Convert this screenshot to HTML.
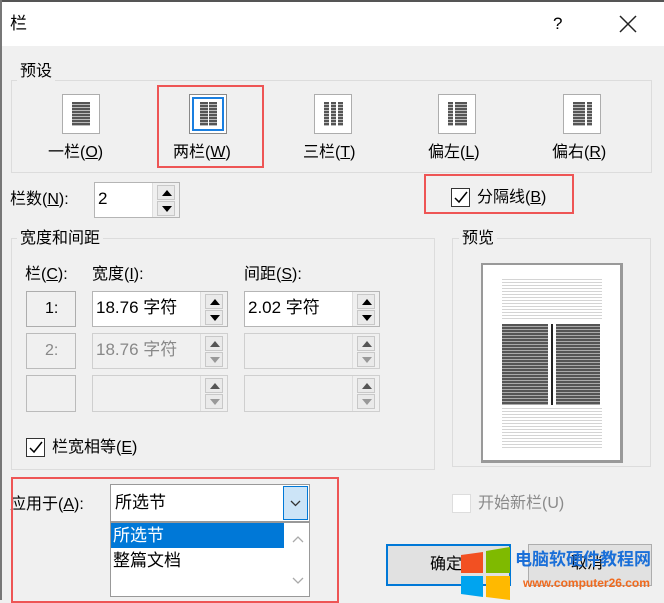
<!DOCTYPE html>
<html><head><meta charset="utf-8"><style>
*{box-sizing:border-box;margin:0;padding:0}
body{width:664px;height:600px;background:#f0f0f0;font-family:"Liberation Sans","Noto Sans CJK SC",sans-serif;font-size:16px;color:#000;position:relative;overflow:hidden}
.a{position:absolute}
.t{position:absolute;white-space:nowrap;line-height:20px}
.grp{position:absolute;border:1px solid #dcdcdc}
.ico{position:absolute;width:38px;height:40px;background:#fff;border:1px solid #adadad}
.red{position:absolute;border:2px solid #ee5555;z-index:5}
.inp{position:absolute;background:#fff;border:1px solid #b5b5b5}
.dis{background:#f0f0f0;border-color:#cfcfcf}
.sp{position:absolute;right:0;top:0;bottom:0;width:27px;border-left:1px solid #ddd;background:#f0f0f0}
.sp i{position:absolute;left:4px;width:18px;height:15px;border:1px solid #c8c8c8;background:#eaeaea}
.up:after{content:"";position:absolute;left:4px;top:4px;border-left:5px solid transparent;border-right:5px solid transparent;border-bottom:6px solid #000}
.dn:after{content:"";position:absolute;left:4px;top:4px;border-left:5px solid transparent;border-right:5px solid transparent;border-top:6px solid #000}
.g.up:after{border-bottom-color:#555}.g.dn:after{border-top-color:#999}
.btn{position:absolute;background:#f0f0f0;border:1px solid #adadad}
.cb{position:absolute;width:19px;height:19px;border:1px solid #333;background:#fff}
u{text-decoration:underline}
</style></head><body>
<div class="a" style="left:0;top:0;width:664px;height:46px;background:#fff;border-top:2px solid #555"></div>
<div class="a" style="left:0;top:0;width:2px;height:600px;background:#777"></div>
<div class="t" style="left:10px;top:14px;font-size:17px">栏</div>
<div class="t" style="left:553px;top:14px;font-size:17px">?</div>
<svg class="a" style="left:618px;top:14px" width="20" height="20"><path d="M2 2L18 18M18 2L2 18" stroke="#222" stroke-width="1.5"/></svg>

<div class="grp" style="left:11px;top:80px;width:641px;height:93px"></div>
<div class="t" style="left:17px;top:62px;background:#f0f0f0;padding:0 3px">预设</div>
<div class="ico" style="left:62px;top:94px"><div class="a" style="left:9px;top:7px;width:18px;height:24px;background:repeating-linear-gradient(#555 0 2px,#bbb 2px 3px)"></div></div>
<div class="ico" style="left:189px;top:94px;border:1px solid #888"><div class="a" style="left:2px;top:2px;width:32px;height:34px;border:2px solid #1a7fe0"></div><div class="a" style="left:10px;top:7px;width:8px;height:24px;background:repeating-linear-gradient(#555 0 2px,#bbb 2px 3px)"></div><div class="a" style="left:19px;top:7px;width:8px;height:24px;background:repeating-linear-gradient(#555 0 2px,#bbb 2px 3px)"></div></div>
<div class="ico" style="left:314px;top:94px"><div class="a" style="left:9px;top:7px;width:5px;height:24px;background:repeating-linear-gradient(#555 0 2px,#bbb 2px 3px)"></div><div class="a" style="left:16px;top:7px;width:5px;height:24px;background:repeating-linear-gradient(#555 0 2px,#bbb 2px 3px)"></div><div class="a" style="left:23px;top:7px;width:5px;height:24px;background:repeating-linear-gradient(#555 0 2px,#bbb 2px 3px)"></div></div>
<div class="ico" style="left:438px;top:94px"><div class="a" style="left:9px;top:7px;width:5px;height:24px;background:repeating-linear-gradient(#555 0 2px,#bbb 2px 3px)"></div><div class="a" style="left:16px;top:7px;width:12px;height:24px;background:repeating-linear-gradient(#555 0 2px,#bbb 2px 3px)"></div></div>
<div class="ico" style="left:563px;top:94px"><div class="a" style="left:9px;top:7px;width:12px;height:24px;background:repeating-linear-gradient(#555 0 2px,#bbb 2px 3px)"></div><div class="a" style="left:23px;top:7px;width:5px;height:24px;background:repeating-linear-gradient(#555 0 2px,#bbb 2px 3px)"></div></div>
<div class="t" style="left:48px;top:143px">一栏(<u>O</u>)</div>
<div class="t" style="left:173px;top:143px">两栏(<u>W</u>)</div>
<div class="t" style="left:303px;top:143px">三栏(<u>T</u>)</div>
<div class="t" style="left:428px;top:143px">偏左(<u>L</u>)</div>
<div class="t" style="left:552px;top:143px">偏右(<u>R</u>)</div>
<div class="red" style="left:157px;top:85px;width:107px;height:83px"></div>

<div class="t" style="left:10px;top:190px">栏数(<u>N</u>):</div>
<div class="inp" style="left:94px;top:182px;width:86px;height:36px"><div class="t" style="left:3px;top:6px;font-size:17px">2</div><div class="sp"><i class="up" style="top:2px"></i><i class="dn" style="top:18px"></i></div></div>
<div class="red" style="left:424px;top:174px;width:150px;height:40px"></div>
<div class="cb" style="left:451px;top:188px"><svg width="17" height="17" class="a"><path d="M3 9l4 4 8-10" stroke="#000" stroke-width="1.5" fill="none"/></svg></div>
<div class="t" style="left:477px;top:188px">分隔线(<u>B</u>)</div>

<div class="grp" style="left:11px;top:238px;width:424px;height:232px"></div>
<div class="t" style="left:17px;top:229px;background:#f0f0f0;padding:0 3px">宽度和间距</div>
<div class="grp" style="left:452px;top:238px;width:199px;height:229px"></div>
<div class="t" style="left:459px;top:229px;background:#f0f0f0;padding:0 3px">预览</div>
<div class="a" style="left:481px;top:263px;width:142px;height:200px;background:#fff;border:3px solid #999;border-top-width:2px;border-left-width:2px"></div>
<div class="a" style="left:502px;top:279px;width:100px;height:42px;background:repeating-linear-gradient(#d4d4d4 0 1px,#fff 1px 3px)"></div>
<div class="a" style="left:502px;top:324px;width:46px;height:81px;background:repeating-linear-gradient(#555 0 2px,#aaa 2px 3px)"></div>
<div class="a" style="left:551px;top:324px;width:2px;height:81px;background:#222"></div>
<div class="a" style="left:556px;top:324px;width:44px;height:81px;background:repeating-linear-gradient(#555 0 2px,#aaa 2px 3px)"></div>
<div class="a" style="left:502px;top:408px;width:100px;height:40px;background:repeating-linear-gradient(#d4d4d4 0 1px,#fff 1px 3px)"></div>

<div class="t" style="left:25px;top:265px">栏(<u>C</u>):</div>
<div class="t" style="left:92px;top:265px">宽度(<u>I</u>):</div>
<div class="t" style="left:244px;top:265px">间距(<u>S</u>):</div>
<div class="btn" style="left:26px;top:291px;width:50px;height:36px"><div class="t" style="left:18px;top:7px">1:</div></div>
<div class="btn" style="left:26px;top:333px;width:50px;height:36px;border-color:#bbb"><div class="t" style="left:18px;top:7px;color:#888">2:</div></div>
<div class="btn" style="left:26px;top:375px;width:50px;height:37px;border-color:#bbb"></div>
<div class="inp" style="left:92px;top:291px;width:136px;height:36px"><div class="t" style="left:3px;top:6px;font-size:17px">18.76 字符</div><div class="sp"><i class="up" style="top:2px"></i><i class="dn" style="top:18px"></i></div></div>
<div class="inp dis" style="left:92px;top:333px;width:136px;height:36px"><div class="t" style="left:3px;top:6px;font-size:17px;color:#888">18.76 字符</div><div class="sp"><i class="up g" style="top:2px"></i><i class="dn g" style="top:18px"></i></div></div>
<div class="inp dis" style="left:92px;top:375px;width:136px;height:37px"><div class="sp"><i class="up g" style="top:2px"></i><i class="dn g" style="top:18px"></i></div></div>
<div class="inp" style="left:244px;top:291px;width:136px;height:36px"><div class="t" style="left:3px;top:6px;font-size:17px">2.02 字符</div><div class="sp"><i class="up" style="top:2px"></i><i class="dn" style="top:18px"></i></div></div>
<div class="inp dis" style="left:244px;top:333px;width:136px;height:36px"><div class="sp"><i class="up g" style="top:2px"></i><i class="dn g" style="top:18px"></i></div></div>
<div class="inp dis" style="left:244px;top:375px;width:136px;height:37px"><div class="sp"><i class="up g" style="top:2px"></i><i class="dn g" style="top:18px"></i></div></div>
<div class="cb" style="left:26px;top:438px"><svg width="17" height="17" class="a"><path d="M3 9l4 4 8-10" stroke="#000" stroke-width="1.5" fill="none"/></svg></div>
<div class="t" style="left:52px;top:438px">栏宽相等(<u>E</u>)</div>

<div class="red" style="left:11px;top:477px;width:328px;height:126px"></div>
<div class="t" style="left:10px;top:495px">应用于(<u>A</u>):</div>
<div class="inp" style="left:110px;top:484px;width:200px;height:38px;border-color:#999"><div class="t" style="left:4px;top:8px;font-size:17px">所选节</div><div class="a" style="right:1px;top:1px;width:25px;height:34px;background:#cce4f7;border:1px solid #0078d7"><svg width="23" height="32" class="a"><path d="M7 14l4.5 4.5L16 14" stroke="#333" stroke-width="1.3" fill="none"/></svg></div></div>
<div class="a" style="left:110px;top:522px;width:200px;height:75px;background:#fff;border:1px solid #999"></div>
<div class="a" style="left:111px;top:523px;width:173px;height:25px;background:#0078d7"></div>
<div class="t" style="left:113px;top:526px;color:#fff;font-size:17px">所选节</div>
<div class="t" style="left:113px;top:551px;font-size:17px">整篇文档</div>
<svg class="a" style="left:290px;top:530px" width="16" height="60"><path d="M3 12l5-5 5 5M3 48l5 5 5-5" stroke="#aaa" stroke-width="1.3" fill="none"/></svg>

<div class="a" style="left:452px;top:494px;width:19px;height:19px;background:#fff;border:1px solid #ddd"></div>
<div class="t" style="left:478px;top:494px;color:#8a8a8a">开始新栏(U)</div>

<div class="btn" style="left:386px;top:544px;width:125px;height:42px;border:2px solid #0078d7;background:#e1e1e1"><div class="t" style="left:42px;top:9px">确定</div></div>
<div class="btn" style="left:528px;top:544px;width:124px;height:42px;background:#e1e1e1"><div class="t" style="left:42px;top:9px">取消</div></div>
<svg class="a" style="left:460px;top:545px" width="52" height="55"><path d="M1 10L23 7V28H1Z" fill="#f25022"/><path d="M26 6L50 2V28H26Z" fill="#7fba00"/><path d="M1 31H23V52L1 49Z" fill="#00a4ef"/><path d="M26 31H50V55L26 52Z" fill="#ffb900"/></svg>
<div class="t" style="left:515px;top:550px;color:#1a6fd8;font-size:17px;font-weight:bold">电脑软硬件教程网</div>
<div class="t" style="left:523px;top:573px;color:#f06a1e;font-size:12px;font-weight:bold">www.computer26.com</div>
</body></html>
